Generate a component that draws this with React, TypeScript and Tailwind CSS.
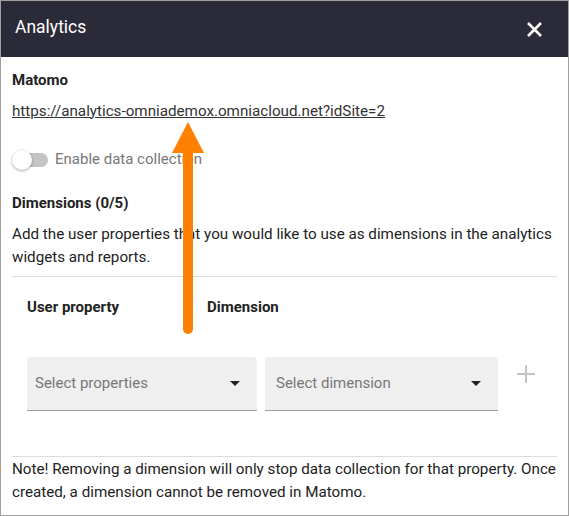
import { useState } from "react";

function Select({ placeholder, width }: { placeholder: string; width: string }) {
  return (
    <div
      className={`flex h-[54px] items-center justify-between rounded-t-[4px] border-b border-[#9e9e9e] bg-[#efefef] pr-[17px] ${width}`}
    >
      <span className="text-[15px] text-[#777]">{placeholder}</span>
      <svg width="10" height="5" viewBox="0 0 10 5">
        <path d="M0 0 L10 0 L5 5 Z" fill="#222" />
      </svg>
    </div>
  );
}

export default function App() {
  const [enabled, setEnabled] = useState(false);
  return (
    <div
      className="relative h-[516px] w-[569px] border border-[#a0a0a0] bg-white text-[#222]"
      style={{ fontFamily: "Roboto, 'Liberation Sans', sans-serif" }}
    >
      <div className="flex h-[56px] items-center justify-between bg-[#2b2a38] pl-[14px] pr-[26px]">
        <h1 className="-mt-[3px] text-[17.5px] text-white">Analytics</h1>
        <svg width="15" height="15" viewBox="0 0 15 15">
          <path d="M1 1 L14 14 M14 1 L1 14" stroke="white" strokeWidth="2.6" />
        </svg>
      </div>

      <div className="px-[11px] text-[15px]">
        <div className="mt-[12px] font-bold">Matomo</div>
        <a className="mt-[8px] block text-[15.2px] text-[#333] underline">
          https://analytics-omniademox.omniacloud.net?idSite=2
        </a>

        <div className="mt-[26px] flex items-center gap-[8px]">
          <button
            className="relative h-[20px] w-[36px]"
            onClick={() => setEnabled(!enabled)}
          >
            <span className="absolute left-[2px] top-[3px] h-[14px] w-[34px] rounded-full bg-[#c4c4c4]" />
            <span className="absolute left-0 top-0 h-[20px] w-[20px] rounded-full bg-white shadow-[0_1px_3px_rgba(0,0,0,0.35)]" />
          </button>
          <span className="-ml-[1px] text-[15px] text-[#777]">Enable data collection</span>
        </div>

        <div className="mt-[21px] font-bold">Dimensions (0/5)</div>
        <p className="mt-[9px] text-[15.2px] leading-[23px]">
          Add the user properties that you would like to use as dimensions in
          the analytics widgets and reports.
        </p>
        <div className="mt-[7px] border-t border-[#dcdcdc]" />

        <div className="flex pl-[15px] pt-[19px] font-bold">
          <span className="w-[180px]">User property</span>
          <span>Dimension</span>
        </div>

        <div className="mt-[38px] flex items-start pl-[15px]">
          <div className="flex gap-[8px]">
            <Select placeholder="Select properties" width="w-[230px] pl-[8px]" />
            <Select placeholder="Select dimension" width="w-[233px] pl-[11px]" />
          </div>
          <svg className="ml-[18px] mt-[7px]" width="20" height="20" viewBox="0 0 20 20">
            <path d="M10 1 V19 M1 10 H19" stroke="#c4c4c4" strokeWidth="2" />
          </svg>
        </div>

        <div className="mt-[45px] border-t border-[#dcdcdc]" />
        <p className="mt-[1px] text-[15.2px] leading-[23px]">
          Note! Removing a dimension will only stop data collection for that
          property. Once created, a dimension cannot be removed in Matomo.
        </p>
      </div>

      <svg
        className="pointer-events-none absolute left-[170px] top-[121px]"
        width="34"
        height="214"
        viewBox="0 0 34 214"
      >
        <path d="M17 0 L33 31 L1 31 Z" fill="#ff8000" />
        <path d="M17 30 V207" stroke="#ff8000" strokeWidth="10" strokeLinecap="round" />
      </svg>
    </div>
  );
}
